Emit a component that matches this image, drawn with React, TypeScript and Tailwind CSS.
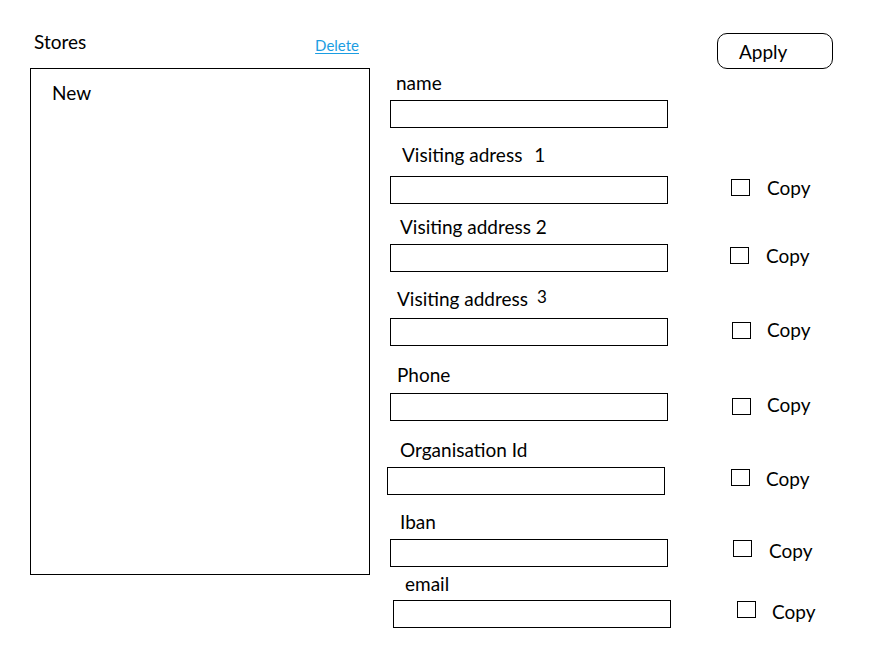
const fields = [
  {
    label: "name",
    wrap: "mt-[2px]",
    labelCls: "pl-[16px]",
    inputCls: "mt-[5px] ml-[10px]",
    copy: null,
  },
  {
    label: "Visiting adress",
    suffix: "1",
    suffixCls: "ml-[12px]",
    wrap: "mt-[15px]",
    labelCls: "pl-[22px]",
    inputCls: "mt-[9px] ml-[10px]",
    copy: { box: "ml-[63px] mt-[3px]", text: "ml-[17px]" },
  },
  {
    label: "Visiting address 2",
    wrap: "mt-[11px]",
    labelCls: "pl-[20px]",
    inputCls: "mt-[5px] ml-[10px]",
    copy: { box: "ml-[62px] mt-[3px]", text: "ml-[17px]" },
  },
  {
    label: "Visiting address",
    suffix: "3",
    suffixCls: "ml-[9px] relative -top-[3px] text-[17px] leading-[20px]",
    wrap: "mt-[15px]",
    labelCls: "pl-[17px] h-[24px]",
    inputCls: "mt-[7px] ml-[10px]",
    copy: { box: "ml-[64px] mt-[4px]", text: "ml-[16px]" },
  },
  {
    label: "Phone",
    wrap: "mt-[17px]",
    labelCls: "pl-[17px]",
    inputCls: "mt-[6px] ml-[10px]",
    copy: { box: "ml-[64px] mt-[5px]", text: "ml-[16px]" },
  },
  {
    label: "Organisation Id",
    wrap: "mt-[17px]",
    labelCls: "pl-[20px]",
    inputCls: "mt-[5px] ml-[7px]",
    copy: { box: "ml-[66px] mt-[2px]", text: "ml-[16px]" },
  },
  {
    label: "Iban",
    wrap: "mt-[15px]",
    labelCls: "pl-[20px]",
    inputCls: "mt-[5px] ml-[10px]",
    copy: { box: "ml-[65px] mt-[1px]", text: "ml-[17px]" },
  },
  {
    label: "email",
    wrap: "mt-[5px]",
    labelCls: "pl-[25px]",
    inputCls: "mt-[4px] ml-[13px]",
    copy: { box: "ml-[66px] mt-[1px]", text: "ml-[16px]" },
  },
];

export default function App() {
  return (
    <div className="w-[871px] h-[656px] bg-white text-black flex font-['Lato',sans-serif] text-[19px] leading-[24px] overflow-hidden">
      {/* stores list */}
      <div className="ml-[30px] w-[340px] pt-[30px] flex flex-col">
        <div className="flex justify-between items-start h-[24px]">
          <span className="pl-[4px]">Stores</span>
          <a
            href="#"
            className="mt-[5px] mr-[11px] text-[15px] leading-[20px] text-[#1b9de2] underline underline-offset-2"
          >
            Delete
          </a>
        </div>
        <div className="mt-[14px] h-[507px] border border-black pl-[21px] pt-[12px]">
          <div>New</div>
        </div>
      </div>

      {/* form */}
      <div className="ml-[10px] flex flex-col">
        <button className="mt-[33px] ml-[337px] w-[116px] h-[36px] border border-black rounded-[10px] text-left pl-[21px] pt-[1px] leading-[24px] self-start">
          Apply
        </button>

        {fields.map((f, i) => (
          <div className={f.wrap} key={i}>
            <div className={f.labelCls}>
              {f.label}
              {f.suffix && <span className={"inline-block " + f.suffixCls}>{f.suffix}</span>}
            </div>
            <div className={"flex items-start " + f.inputCls}>
              <div className="w-[278px] h-[28px] border border-black" />
              {f.copy && (
                <>
                  <div className={"w-[19px] h-[17px] border border-black " + f.copy.box} />
                  <span className={f.copy.text}>Copy</span>
                </>
              )}
            </div>
          </div>
        ))}
      </div>
    </div>
  );
}
